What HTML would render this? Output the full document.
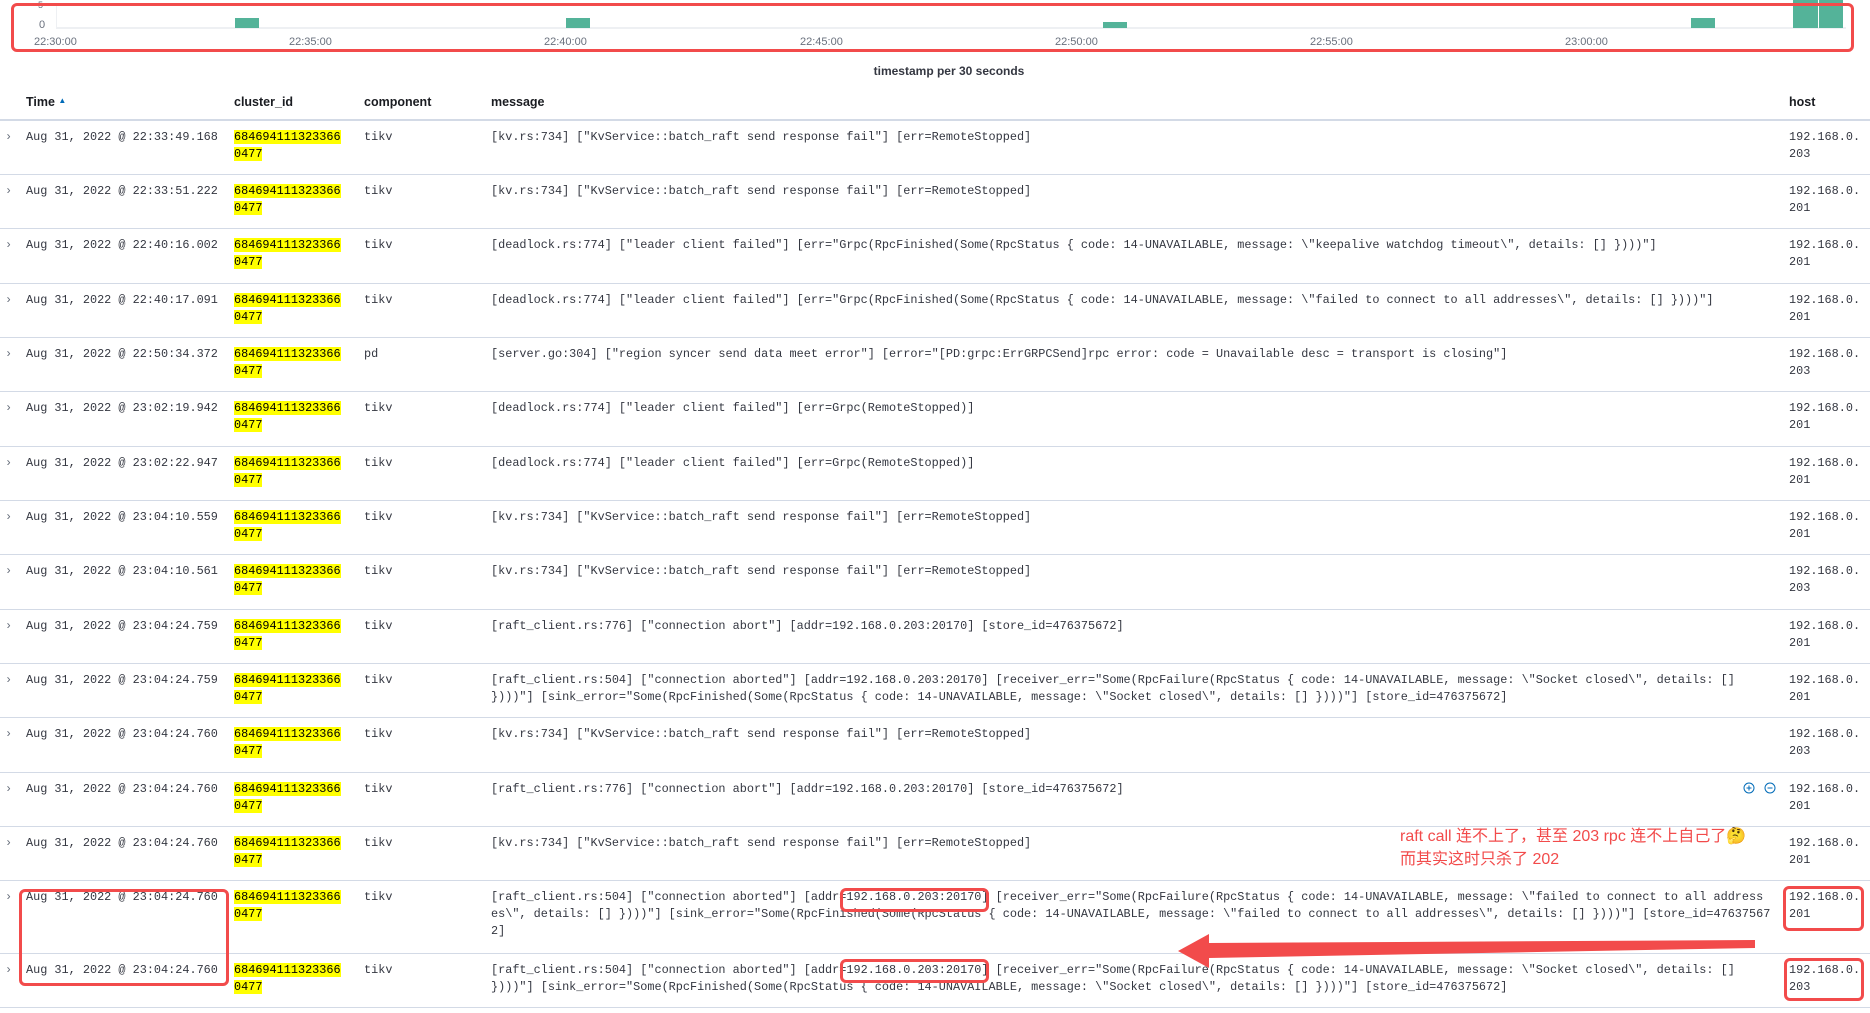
<!DOCTYPE html>
<html><head><meta charset="utf-8"><style>
body{margin:0;width:1870px;height:1013px;background:#fff;position:relative;overflow:hidden;font-family:"Liberation Mono",monospace;color:#343741}
.a{position:absolute;white-space:pre}
.lbl{font-family:"Liberation Sans",sans-serif;font-size:11px;color:#69707d}
.h{font-family:"Liberation Sans",sans-serif;font-weight:bold;font-size:12.5px;color:#1a1c21;top:95px}
.sep{position:absolute;left:0;width:1870px;height:1px;background:#d3dae6}
.t{font-size:11.85px;line-height:17px}
.y{background:#ff0;color:#000}
.box{position:absolute;border:3px solid #f24b4b;border-radius:6px}
.bar{position:absolute;background:#54b399}
</style></head><body>
<!-- chart -->
<div class="a lbl" style="left:38px;top:0px;font-size:9px">5</div>
<div class="a lbl" style="left:39px;top:19px">0</div>
<div style="position:absolute;left:56px;top:27px;width:1790px;height:2px;background:#eef0f3"></div>
<div style="position:absolute;left:56px;top:4px;width:1px;height:23px;background:#eef0f3"></div>
<div class="bar" style="left:235px;top:18px;width:24px;height:10px"></div>
<div class="bar" style="left:566px;top:18px;width:24px;height:10px"></div>
<div class="bar" style="left:1103px;top:22px;width:24px;height:6px"></div>
<div class="bar" style="left:1691px;top:18px;width:24px;height:10px"></div>
<div class="bar" style="left:1793px;top:0px;width:25px;height:28px"></div>
<div class="bar" style="left:1819px;top:0px;width:24px;height:28px"></div>
<div class="a lbl" style="left:34px;top:36px">22:30:00</div>
<div class="a lbl" style="left:289px;top:36px">22:35:00</div>
<div class="a lbl" style="left:544px;top:36px">22:40:00</div>
<div class="a lbl" style="left:800px;top:36px">22:45:00</div>
<div class="a lbl" style="left:1055px;top:36px">22:50:00</div>
<div class="a lbl" style="left:1310px;top:36px">22:55:00</div>
<div class="a lbl" style="left:1565px;top:36px">23:00:00</div>
<div class="box" style="left:11px;top:3px;width:1837px;height:43px"></div>
<div class="a" style="left:0;width:1898px;text-align:center;top:64px;font-family:'Liberation Sans',sans-serif;font-weight:bold;font-size:12px;color:#343741">timestamp per 30 seconds</div>
<!-- header -->
<div class="a h" style="left:26px">Time <span style="color:#006bb8;font-size:8px;vertical-align:3px">▲</span></div>
<div class="a h" style="left:234px">cluster_id</div>
<div class="a h" style="left:364px">component</div>
<div class="a h" style="left:491px">message</div>
<div class="a h" style="left:1789px">host</div>
<div class="sep" style="top:119px;height:2px"></div>

<div id="rows"></div>
<script>
var R=[
["22:33:49.168","tikv",["[kv.rs:734] [\"KvService::batch_raft send response fail\"] [err=RemoteStopped]"],"203"],
["22:33:51.222","tikv",["[kv.rs:734] [\"KvService::batch_raft send response fail\"] [err=RemoteStopped]"],"201"],
["22:40:16.002","tikv",["[deadlock.rs:774] [\"leader client failed\"] [err=\"Grpc(RpcFinished(Some(RpcStatus { code: 14-UNAVAILABLE, message: \\\"keepalive watchdog timeout\\\", details: [] })))\"]"],"201"],
["22:40:17.091","tikv",["[deadlock.rs:774] [\"leader client failed\"] [err=\"Grpc(RpcFinished(Some(RpcStatus { code: 14-UNAVAILABLE, message: \\\"failed to connect to all addresses\\\", details: [] })))\"]"],"201"],
["22:50:34.372","pd",["[server.go:304] [\"region syncer send data meet error\"] [error=\"[PD:grpc:ErrGRPCSend]rpc error: code = Unavailable desc = transport is closing\"]"],"203"],
["23:02:19.942","tikv",["[deadlock.rs:774] [\"leader client failed\"] [err=Grpc(RemoteStopped)]"],"201"],
["23:02:22.947","tikv",["[deadlock.rs:774] [\"leader client failed\"] [err=Grpc(RemoteStopped)]"],"201"],
["23:04:10.559","tikv",["[kv.rs:734] [\"KvService::batch_raft send response fail\"] [err=RemoteStopped]"],"201"],
["23:04:10.561","tikv",["[kv.rs:734] [\"KvService::batch_raft send response fail\"] [err=RemoteStopped]"],"203"],
["23:04:24.759","tikv",["[raft_client.rs:776] [\"connection abort\"] [addr=192.168.0.203:20170] [store_id=476375672]"],"201"],
["23:04:24.759","tikv",["[raft_client.rs:504] [\"connection aborted\"] [addr=192.168.0.203:20170] [receiver_err=\"Some(RpcFailure(RpcStatus { code: 14-UNAVAILABLE, message: \\\"Socket closed\\\", details: []","})))\"] [sink_error=\"Some(RpcFinished(Some(RpcStatus { code: 14-UNAVAILABLE, message: \\\"Socket closed\\\", details: [] })))\"] [store_id=476375672]"],"201"],
["23:04:24.760","tikv",["[kv.rs:734] [\"KvService::batch_raft send response fail\"] [err=RemoteStopped]"],"203"],
["23:04:24.760","tikv",["[raft_client.rs:776] [\"connection abort\"] [addr=192.168.0.203:20170] [store_id=476375672]"],"201"],
["23:04:24.760","tikv",["[kv.rs:734] [\"KvService::batch_raft send response fail\"] [err=RemoteStopped]"],"201"],
["23:04:24.760","tikv",["[raft_client.rs:504] [\"connection aborted\"] [addr=192.168.0.203:20170] [receiver_err=\"Some(RpcFailure(RpcStatus { code: 14-UNAVAILABLE, message: \\\"failed to connect to all address","es\\\", details: [] })))\"] [sink_error=\"Some(RpcFinished(Some(RpcStatus { code: 14-UNAVAILABLE, message: \\\"failed to connect to all addresses\\\", details: [] })))\"] [store_id=47637567","2]"],"201"],
["23:04:24.760","tikv",["[raft_client.rs:504] [\"connection aborted\"] [addr=192.168.0.203:20170] [receiver_err=\"Some(RpcFailure(RpcStatus { code: 14-UNAVAILABLE, message: \\\"Socket closed\\\", details: []","})))\"] [sink_error=\"Some(RpcFinished(Some(RpcStatus { code: 14-UNAVAILABLE, message: \\\"Socket closed\\\", details: [] })))\"] [store_id=476375672]"],"203"]
];
var tops=[121,175,229,284,338,392,447,501,555,610,664,718,773,827,881,954];
var h="";
function esc(s){return s.replace(/&/g,"&amp;").replace(/</g,"&lt;");}
R.forEach(function(r,i){
 var t=tops[i]+8;
 h+='<div class="a t" style="left:5px;top:'+t+'px;color:#69707d">&#x203A;</div>';
 h+='<div class="a t" style="left:26px;top:'+t+'px">Aug 31, 2022 @ '+r[0]+'</div>';
 h+='<div class="a t" style="left:234px;top:'+t+'px"><span class="y">684694111323366</span><br><span class="y">0477</span></div>';
 h+='<div class="a t" style="left:364px;top:'+t+'px">'+r[1]+'</div>';
 h+='<div class="a t" style="left:491px;top:'+t+'px">'+r[2].map(esc).join("<br>")+'</div>';
 h+='<div class="a t" style="left:1789px;top:'+t+'px">192.168.0.<br>'+r[3]+'</div>';
 var s=(i<15?tops[i+1]-1:1007);
 h+='<div class="sep" style="top:'+s+'px"></div>';
});
document.getElementById("rows").innerHTML=h;
</script>
<!-- icons -->
<svg style="position:absolute;left:1743px;top:781px" width="40" height="14"><circle cx="6" cy="7" r="5" fill="none" stroke="#006bb8" stroke-width="1"/><path d="M3.5 7h5M6 4.5v5" stroke="#006bb8"/><circle cx="27" cy="7" r="5" fill="none" stroke="#006bb8" stroke-width="1"/><path d="M24.5 7h5" stroke="#006bb8"/></svg>
<!-- annotation -->
<div class="a" style="left:1400px;top:825px;font-family:'Liberation Sans','Noto Sans CJK SC',sans-serif;font-size:16px;line-height:23px;color:#f24b4b">raft call 连不上了，甚至 203 rpc 连不上自己了🤔<br>而其实这时只杀了 202</div>
<div class="box" style="left:19px;top:889px;width:204px;height:91px"></div>
<div class="box" style="left:840px;top:888px;width:143px;height:18px"></div>
<div class="box" style="left:840px;top:959px;width:143px;height:18px"></div>
<div class="box" style="left:1783px;top:886px;width:75px;height:39px"></div>
<div class="box" style="left:1784px;top:958px;width:74px;height:37px"></div>
<svg style="position:absolute;left:0;top:0" width="1870" height="1013"><path d="M1178 951 L1209 934 L1209 943 L1755 940 L1755 948 L1209 958 L1209 968 Z" fill="#f24b4b"/></svg>
</body></html>
